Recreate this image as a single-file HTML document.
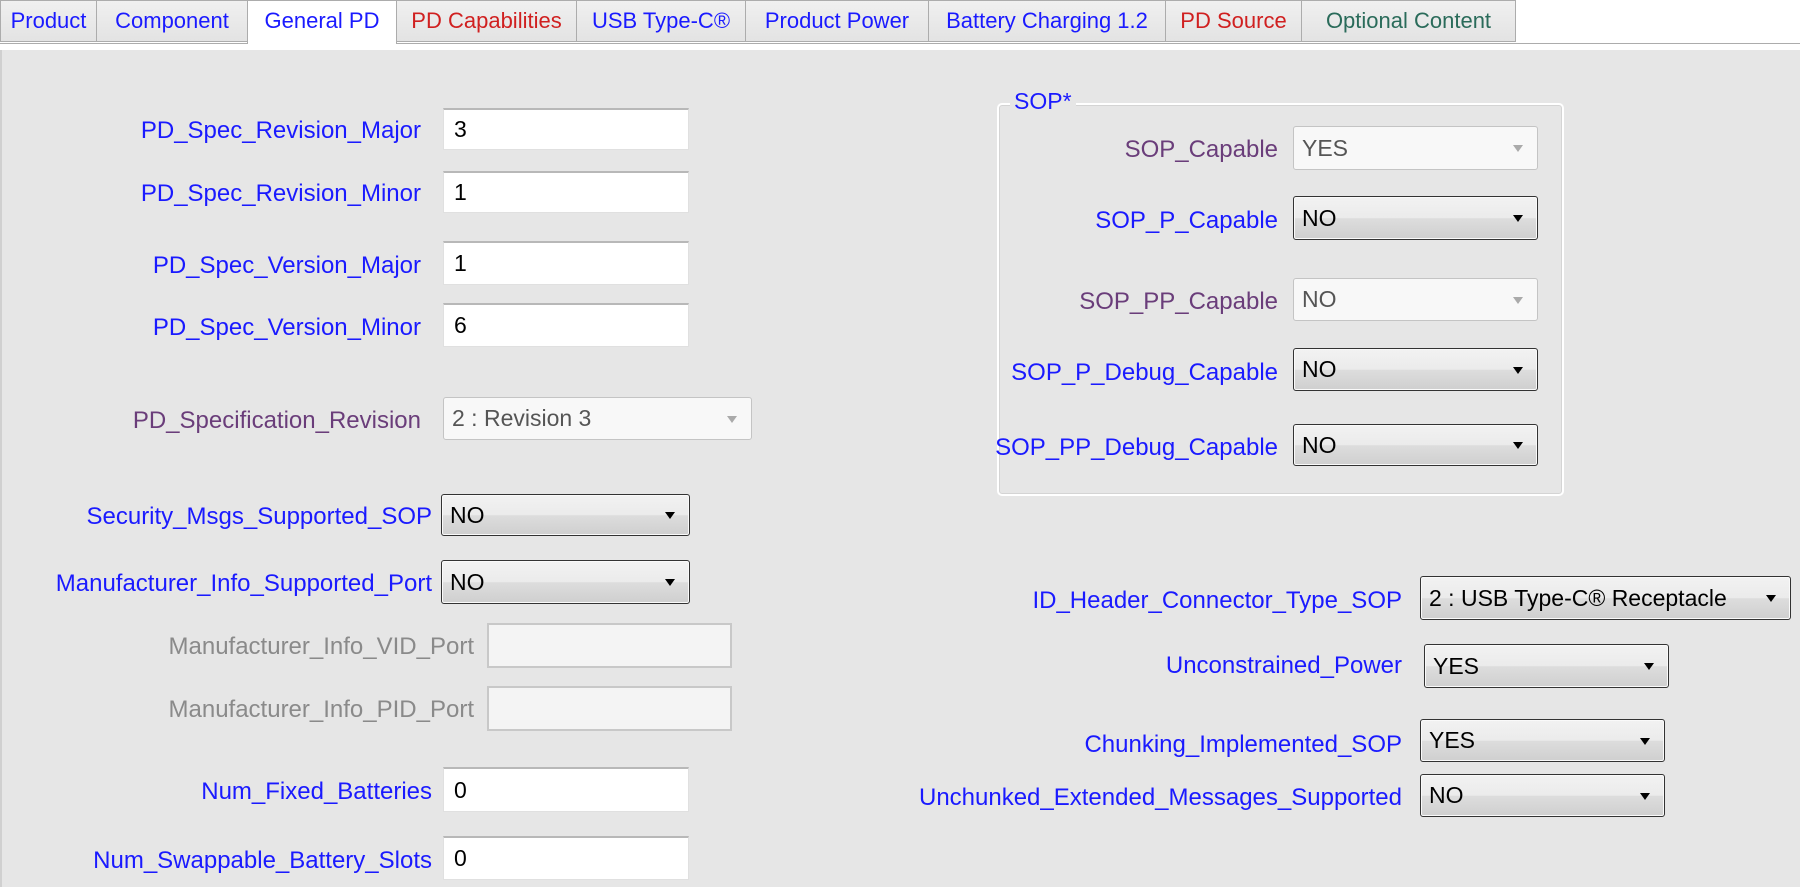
<!DOCTYPE html>
<html><head><meta charset="utf-8"><style>
*{box-sizing:border-box;margin:0;padding:0}
body{width:1800px;height:887px;overflow:hidden;background:#fff;font-family:"Liberation Sans",sans-serif;position:relative}
.tab{position:absolute;top:0;height:42px;border:1px solid #acacac;background:linear-gradient(#f0f0f0,#e3e3e3);font-size:22px;line-height:40px;text-align:center;white-space:nowrap}
.tab.act{background:#fff;border-bottom:none;height:44px}
.bar{position:absolute;left:0;top:43px;width:1800px;height:1px;background:#acacac}
.content{position:absolute;left:0;top:50px;width:1800px;height:837px;background:#e6e6e6;border-left:2px solid #d0d0d0}
.lbl{position:absolute;font-size:24px;color:#1a1aff;text-align:right;white-space:nowrap;line-height:26px}
.pur{color:#6a3d7a}.gry{color:#8a8a8a}
.in{position:absolute;background:#fff;border:1px solid #e0e0e0;border-top:2px solid #b8b8b8;font-size:23px;display:flex;align-items:center;padding-left:10px;color:#000}
.in.dis{background:#f4f4f4;border:2px solid #c8c8c8}
.cb{position:absolute;border:1px solid #333;border-radius:3px;background:linear-gradient(#f2f2f2 0%,#ebebeb 50%,#dddddd 51%,#cfcfcf 100%);font-size:23px;display:flex;align-items:center;padding-left:8px;color:#000;box-shadow:inset 0 0 0 1px #fafafa}
.cb::after{content:"";position:absolute;right:14px;top:50%;margin-top:-3px;border-left:5px solid transparent;border-right:5px solid transparent;border-top:7px solid #000}
.cb.dis{background:#f8f8f8;border:1px solid #c4c4c4;color:#555;box-shadow:none}
.cb.dis::after{border-top-color:#aaa}
.grp{position:absolute;left:997px;top:103px;width:567px;height:393px;border:2px solid #fff;border-radius:5px;box-shadow:inset 0 0 0 1px #d4d4d4}
.leg{position:absolute;left:1010px;top:88px;background:#e6e6e6;padding:0 4px;font-size:23px;color:#1a1aff}
</style></head><body>
<div class="bar"></div>
<div class="tab" style="left:0;width:97px;color:#1a1aff">Product</div>
<div class="tab" style="left:96px;width:152px;color:#1a1aff">Component</div>
<div class="tab" style="left:247px;width:150px;color:#1a1aff">General PD</div>
<div class="tab" style="left:396px;width:181px;color:#d02020">PD Capabilities</div>
<div class="tab" style="left:576px;width:170px;color:#1a1aff">USB Type-C®</div>
<div class="tab" style="left:745px;width:184px;color:#1a1aff">Product Power</div>
<div class="tab" style="left:928px;width:238px;color:#1a1aff">Battery Charging 1.2</div>
<div class="tab" style="left:1165px;width:137px;color:#d02020">PD Source</div>
<div class="tab" style="left:1301px;width:215px;color:#2a6b5a">Optional Content</div>
<div class="tab act" style="left:247px;width:150px;color:#1a1aff">General PD</div>
<div class="content"></div>

<div class="lbl" style="right:1379px;top:118px">PD_Spec_Revision_Major</div>
<div class="in" style="left:443px;top:108px;width:246px;height:42px">3</div>
<div class="lbl" style="right:1379px;top:181px">PD_Spec_Revision_Minor</div>
<div class="in" style="left:443px;top:171px;width:246px;height:42px">1</div>
<div class="lbl" style="right:1379px;top:253px">PD_Spec_Version_Major</div>
<div class="in" style="left:443px;top:241px;width:246px;height:44px">1</div>
<div class="lbl" style="right:1379px;top:315px">PD_Spec_Version_Minor</div>
<div class="in" style="left:443px;top:303px;width:246px;height:44px">6</div>
<div class="lbl pur" style="right:1379px;top:408px">PD_Specification_Revision</div>
<div class="cb dis" style="left:443px;top:397px;width:309px;height:43px">2 : Revision 3</div>
<div class="lbl" style="right:1368px;top:504px">Security_Msgs_Supported_SOP</div>
<div class="cb" style="left:441px;top:494px;width:249px;height:42px">NO</div>
<div class="lbl" style="right:1368px;top:571px">Manufacturer_Info_Supported_Port</div>
<div class="cb" style="left:441px;top:560px;width:249px;height:44px">NO</div>
<div class="lbl gry" style="right:1326px;top:634px">Manufacturer_Info_VID_Port</div>
<div class="in dis" style="left:487px;top:623px;width:245px;height:45px"></div>
<div class="lbl gry" style="right:1326px;top:697px">Manufacturer_Info_PID_Port</div>
<div class="in dis" style="left:487px;top:686px;width:245px;height:45px"></div>
<div class="lbl" style="right:1368px;top:779px">Num_Fixed_Batteries</div>
<div class="in" style="left:443px;top:767px;width:246px;height:45px">0</div>
<div class="lbl" style="right:1368px;top:848px">Num_Swappable_Battery_Slots</div>
<div class="in" style="left:443px;top:836px;width:246px;height:44px">0</div>

<div class="grp"></div>
<div class="leg">SOP*</div>
<div class="lbl pur" style="right:522px;top:137px">SOP_Capable</div>
<div class="cb dis" style="left:1293px;top:126px;width:245px;height:44px">YES</div>
<div class="lbl" style="right:522px;top:208px">SOP_P_Capable</div>
<div class="cb" style="left:1293px;top:196px;width:245px;height:44px">NO</div>
<div class="lbl pur" style="right:522px;top:289px">SOP_PP_Capable</div>
<div class="cb dis" style="left:1293px;top:278px;width:245px;height:43px">NO</div>
<div class="lbl" style="right:522px;top:360px">SOP_P_Debug_Capable</div>
<div class="cb" style="left:1293px;top:348px;width:245px;height:43px">NO</div>
<div class="lbl" style="right:522px;top:435px">SOP_PP_Debug_Capable</div>
<div class="cb" style="left:1293px;top:424px;width:245px;height:42px">NO</div>

<div class="lbl" style="right:398px;top:588px">ID_Header_Connector_Type_SOP</div>
<div class="cb" style="left:1420px;top:576px;width:371px;height:44px">2 : USB Type-C® Receptacle</div>
<div class="lbl" style="right:398px;top:653px">Unconstrained_Power</div>
<div class="cb" style="left:1424px;top:644px;width:245px;height:44px">YES</div>
<div class="lbl" style="right:398px;top:732px">Chunking_Implemented_SOP</div>
<div class="cb" style="left:1420px;top:719px;width:245px;height:43px">YES</div>
<div class="lbl" style="right:398px;top:785px">Unchunked_Extended_Messages_Supported</div>
<div class="cb" style="left:1420px;top:774px;width:245px;height:43px">NO</div>
</body></html>
